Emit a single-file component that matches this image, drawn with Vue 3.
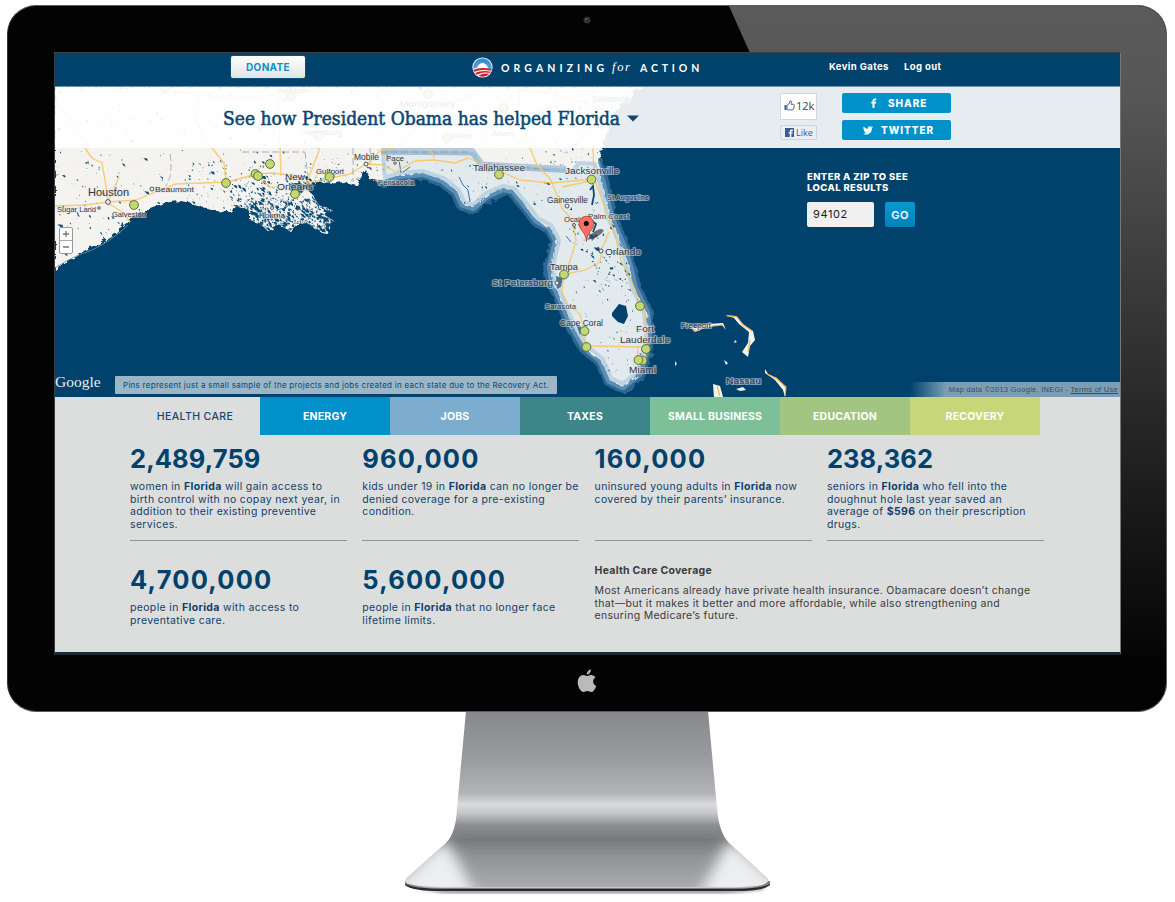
<script setup>
// Deterministic generator so the lakes and marshes always fall in the same places.
function makeRandom(seed) {
  let s = seed
  return () => {
    s = (s * 1664525 + 1013904223) % 4294967296
    return s / 4294967296
  }
}

function specks(seed, count, box, min, max) {
  const r = makeRandom(seed)
  let d = ''
  for (let i = 0; i < count; i++) {
    const x = box[0] + r() * box[2]
    const y = box[1] + r() * box[3]
    const s = min + r() * r() * (max - min)
    const slant = (r() - 0.5) * 2
    d += `M${x.toFixed(1)} ${y.toFixed(1)}l${(s * slant).toFixed(1)} ${(s * 0.8).toFixed(1)}l${(s * 0.7).toFixed(1)} ${(s * 0.5 * r()).toFixed(1)}l${(-s * 0.3).toFixed(1)} ${(-s * 0.9).toFixed(1)}z`
  }
  return d
}

const lakes = [
  specks(7, 330, [55, 87, 550, 100], 0.5, 3.6),
  specks(11, 110, [55, 150, 110, 110], 0.6, 4),
  specks(19, 480, [228, 175, 110, 60], 0.8, 4.8),
  specks(61, 520, [246, 198, 90, 38], 1, 5.2),
  specks(23, 110, [185, 160, 90, 50], 0.6, 3.6),
  specks(29, 60, [300, 162, 90, 26], 0.5, 3),
  specks(31, 90, [545, 90, 65, 80], 0.7, 3.6),
].join('')

const floridaLakes = [
  specks(41, 55, [440, 160, 140, 45], 0.5, 3.4),
  specks(43, 60, [565, 185, 55, 75], 0.6, 4.6),
  specks(47, 70, [590, 250, 42, 40], 0.8, 4.4),
  specks(53, 50, [570, 275, 70, 60], 0.5, 3.2),
  specks(59, 30, [600, 335, 45, 45], 0.5, 2.6),
].join('')

const land =
  'M55 87L55 270 66 261 76 257 88 248 101 243 112 237 121 227 128 222 137 215 150 208 161 204 170 202 181 201 190 203 198 207 207 208 216 211 230 212 237 206 246 208 250 212 250 221 259 223 267 230 275 226 283 227 290 231 298 224 307 223 314 228 326 234 330 226 334 221 325 215 333 210 322 207 317 203 313 195 305 188 307 185 317 182 330 184 343 182 357 185 362 176 366 170 370 180 380 182 392 176 400 175 412 174 423 173 434 175 443 180 451 185 457 191 463 204 473 207 480 200 487 195 496 190 503 188 513 190 519 197 527 207 532 215 537 220 545 226 550 227 555 233 557 240 554 250 553 257 551 267 556 273 553 283 557 290 561 299 565 308 570 314 572 325 580 334 585 347 592 355 601 360 607 370 610 380 617 384 623 386 631 379 639 373 643 361 645 353 648 333 646 312 641 302 634 288 630 270 625 253 620 240 615 228 610 217 606 200 602 188 600 170 598 160 602 148 606 136 611 122 616 111 622 103 630 98 634 91 643 87Z'

const florida =
  'M381 150L475 152 482 164 572 169 578 161 596 162 601 180 606 200 610 217 620 240 625 253 630 270 634 288 641 302 646 312 648 333 645 353 639 373 623 386 610 380 601 360 585 347 572 325 565 308 557 290 553 283 551 267 557 240 550 227 537 220 527 207 513 190 503 188 487 195 473 207 463 204 457 191 443 180 423 173 400 175 383 180Z'

const roads = [
  'M85 148L92 158 102 163 106 186 108 203 122 212 130 222',
  'M55 206L85 205 108 202 136 200 160 190 176 184 228 182 256 174 272 173 290 175 307 183 330 178 350 174 366 164 383 165 396 172 415 161 434 160 455 163 468 158 497 170 520 180 552 183 593 179',
  'M212 148L224 163 226 183', 'M260 178L270 187 293 189', 'M280 148L281 176',
  'M320 148L307 182', 'M366 165L380 151 396 147', 'M108 202L119 177',
  'M530 148L537 165 551 180 562 208 572 220 576 240 571 258 566 272',
  'M593 148L594 178 604 205 615 235 621 260 633 285 643 310 647 330 645 360',
  'M566 274L585 270 600 262 602 248 609 232', 'M564 275L562 292 568 305 580 314 584 330 586 346',
  'M586 346L645 347', 'M429 148L435 158', 'M562 187L595 180', 'M638 347L637 360',
  'M55 100L70 120 90 148', 'M170 92L240 99 330 88', 'M280 148L278 90', 'M210 148L195 120 200 90',
  'M520 88L519 105 530 148', 'M519 90L550 93 590 104', 'M400 148L430 110 470 96',
]

const pins = [
  [134, 205], [226, 183], [270, 164], [255.5, 174], [258, 176], [295, 194], [329.5, 177],
  [499, 174.5], [591.5, 179.5], [564, 274.5], [640, 306], [584.5, 331], [586.5, 347],
  [646, 349], [642.5, 360.5], [638.5, 360], [165, 88], [291, 96], [319, 136], [428, 94], [504, 108], [447, 138],
]

// x, y, text, size, rendered width
const labels = [
  [88, 196, 'Houston', 10.5, 41], [57, 212, 'Sugar Land', 8, 39], [112, 217, 'Galveston', 8, 34],
  [155, 192, 'Beaumont', 8, 39], [285, 180, 'New', 9.5, 20], [277, 190, 'Orleans', 9.5, 36],
  [259, 218, 'Houma', 8, 26], [316, 174, 'Gulfport', 8, 28], [354, 160, 'Mobile', 9, 25],
  [386, 161, 'Pace', 8, 18], [378, 185, 'Pensacola', 8, 36], [473, 171, 'Tallahassee', 9.5, 52],
  [565, 174, 'Jacksonville', 9.5, 54], [547, 203, 'Gainesville', 8.5, 41], [607, 200, 'St Augustine', 8, 42],
  [564, 222, 'Ocala', 8, 20], [588, 219, 'Palm Coast', 8, 41], [605, 255, 'Orlando', 9.5, 36],
  [550, 270, 'Tampa', 9.5, 28], [492, 286, 'St Petersburg', 9.5, 61], [545, 309, 'Sarasota', 8, 31],
  [560, 326, 'Cape Coral', 8.5, 43], [636, 332, 'Fort', 9.5, 18], [620, 343, 'Lauderdale', 9, 50],
  [629, 373, 'Miami', 9.5, 27], [681, 328, 'Freeport', 8, 30], [726, 384, 'Nassau', 9.5, 35],
  [277, 93, 'Jackson', 8, 30], [303, 135, 'Hattiesburg', 8, 39], [400, 107, 'Montgomery', 9.5, 55],
  [450, 138, 'Dothan', 8, 22], [492, 136, 'Albany', 8, 23], [592, 102, 'Savannah', 9, 38],
]

const towns = [[152, 189, 2], [99, 208, 1.3], [108, 202, 2.4], [395, 163, 1.3], [366, 164, 2], [567, 206, 2], [574, 225, 1.5], [601, 251, 2], [272, 208, 1.5], [557, 283, 2]]

const tabs = [
  { name: 'HEALTH CARE', tone: 'active' },
  { name: 'ENERGY', tone: 'energy' },
  { name: 'JOBS', tone: 'jobs' },
  { name: 'TAXES', tone: 'taxes' },
  { name: 'SMALL BUSINESS', tone: 'small' },
  { name: 'EDUCATION', tone: 'education' },
  { name: 'RECOVERY', tone: 'recovery' },
]

const stats = [
  { n: '2,489,759', lines: [['women in ', 'Florida', ' will gain access to'], ['birth control with no copay next year, in'], ['addition to their existing preventive'], ['services.']] },
  { n: '960,000', wide: true, lines: [['kids under 19 in ', 'Florida', ' can no longer be'], ['denied coverage for a pre-existing'], ['condition.']] },
  { n: '160,000', wide: true, lines: [['uninsured young adults in ', 'Florida', ' now'], ['covered by their parents’ insurance.']] },
  { n: '238,362', lines: [['seniors in ', 'Florida', ' who fell into the'], ['doughnut hole last year saved an'], ['average of ', '$596', ' on their prescription'], ['drugs.']] },
  { n: '4,700,000', wide: true, lines: [['people in ', 'Florida', ' with access to'], ['preventative care.']] },
  { n: '5,600,000', wide: true, lines: [['people in ', 'Florida', ' that no longer face'], ['lifetime limits.']] },
]
</script>

<template>
  <div class="stage">
    <div class="monitor">
      <div class="glare"></div>
      <svg class="camera" viewBox="0 0 10 10"><circle cx="5" cy="5" r="3.6" fill="#25262a" /><circle cx="5" cy="5" r="2.6" fill="#4a4b50" /><circle cx="5" cy="5" r="1.6" fill="#17181c" /><circle cx="4.6" cy="4.4" r=".7" fill="#8d8f96" /></svg>
      <div class="screen">
        <header class="topbar">
          <button class="donate">DONATE</button>
          <div class="brand">
            <svg class="brand-mark" viewBox="0 0 22 22">
              <defs>
                <clipPath id="disc"><circle cx="11" cy="11" r="9.8" /></clipPath>
                <linearGradient id="sky" x1="0" y1="0" x2="0" y2="1"><stop offset="0" stop-color="#2f86c6" /><stop offset="1" stop-color="#7cb8e2" /></linearGradient>
              </defs>
              <circle cx="11" cy="11" r="10.6" fill="#fff" />
              <g clip-path="url(#disc)">
                <rect width="22" height="22" fill="url(#sky)" />
                <circle cx="11" cy="12" r="5.6" fill="#fff" />
                <path d="M0 12.6Q10 9 22 13.5V22H0Z" fill="#fff" />
                <path d="M0 14.2Q9 9.6 22 13.2V15Q10 11.4 0 16.6ZM1 18Q10 12.4 22 15.9V17.4Q11 14.2 3 20ZM5 21Q12 15.6 21 18.3L18 22H5Z" fill="#d0202e" />
              </g>
            </svg>
            <span class="brand-name">ORGANIZING</span><em>for</em><span class="brand-name action">ACTION</span>
          </div>
          <nav class="account"><span class="user">Kevin Gates</span><span class="logout">Log out</span></nav>
        </header>

        <section class="hero">
          <svg class="map" viewBox="55 87 1065 310">
            <defs>
              <clipPath id="landclip"><path :d="land" /></clipPath>
              <clipPath id="flclip"><path :d="florida" /></clipPath>
              <filter id="rough" x="-5%" y="-5%" width="110%" height="110%">
                <feTurbulence type="fractalNoise" baseFrequency=".17" numOctaves="3" seed="4" result="n" />
                <feDisplacementMap in="SourceGraphic" in2="n" scale="7" />
              </filter>
              <filter id="soft"><feGaussianBlur stdDeviation=".35" /></filter>
            </defs>
            <rect x="55" y="87" width="1065" height="310" fill="#00426b" />
            <path class="glow outer" :d="florida" filter="url(#rough)" />
            <path class="glow" :d="florida" filter="url(#soft)" />
            <g filter="url(#rough)">
              <path :d="land" fill="#f5f3f0" />
              <path :d="florida" fill="#e2eaed" />
            </g>
            <g clip-path="url(#landclip)">
              <path :d="lakes" fill="#0c4c75" />
              <path class="border" d="M170 154Q172 165 170 177L166 186M242 152L305 152M305 152L308 176M353 148L353 182M370 148L371 162" />
            </g>
            <g clip-path="url(#flclip)">
              <path class="rim" :d="florida" filter="url(#soft)" />
              <path :d="floridaLakes" fill="#0c4c75" />
              <path d="M612 313L619 304 626 306 628 316 624 324 618 322 612 316Z" fill="#00426b" />
              <path d="M590 190L593 186 594 195 592 205M591 220L596 224 593 232" class="river" />
              <path d="M588 232L591 239M566 236L571 242M459 177L463 185 468 190 470 202M399 160L401 173M403 172L410 167" class="river thin" />
              <path d="M556 276L563 278 561 287 557 289ZM575 321L582 328 580 335ZM589 233L596 237 592 241Z" fill="#3f779e" />
            </g>
            <path class="band" d="M381 151.500H472L482 165 566 169.500" />
            <path d="M381 152H470M483 163L550 170" class="border" />
            <g class="roads"><path v-for="(d, i) in roads" :key="i" :d="d" /></g>
            <path class="marsh" d="M289 184Q300 181 307 186L302 193 292 192Z" />
            <path d="M55 268Q75 255 90 251Q112 241 128 225" class="shoal" />
            <g class="isles">
              <path d="M688 325L695 332 703 327 722 325 726 330 723 323 708 324 695 328ZM725 315L736 316 743 324 753 331 755 340 750 346 748 357 742 352 748 343 749 332 739 324 734 318ZM713 384L720 386 723 397 714 397ZM736 389L743 387 746 390 740 391ZM765 369L768 374 777 378 786 388 785 397 783 390 775 380 765 373ZM724 360L728 363 726 365ZM675 361L677 364 675 366ZM735 340L737 342 734 343Z" />
              <path d="M690 326L696 331 706 327 722 325M727 316L737 317 743 325 752 331M750 340L748 352M717 386L720 396M767 374L777 379 786 387 785 396" class="isle-road" />
            </g>
            <g>
              <circle v-for="(t, i) in towns" :key="i" :cx="t[0]" :cy="t[1]" :r="t[2]" class="town" />
            </g>
            <g class="labels">
              <text v-for="l in labels" :key="l[2]" :x="l[0]" :y="l[1]" :font-size="l[3]" :textLength="l[4]" lengthAdjust="spacingAndGlyphs">{{ l[2] }}</text>
            </g>
            <circle v-for="(p, i) in pins" :key="i" :cx="p[0]" :cy="p[1]" r="4.4" class="pin" />
            <path d="M587 240Q592 231 600 229Q606 229 602 233Q597 238 587 240Z" fill="#333" opacity=".65" filter="url(#soft)" />
            <path d="M586.5 241.5C586 232 579 230.500 579 223.500A7.300 7.300 0 0 1 593.600 223.500C593.600 230.500 587 232 586.500 241.500Z" fill="#fb7064" stroke="#b3372f" stroke-width=".8" />
            <circle cx="586.300" cy="223.500" r="2.500" fill="#100" />
            <g class="zoomer">
              <rect x="59.500" y="227.500" width="13" height="26" rx="1.500" />
              <path d="M59.500 240.500H72.500" stroke="#aaa" />
              <path d="M63 234H69M66 231V237M63 247H69" stroke="#777" stroke-width="1.300" />
            </g>
          </svg>

          <div class="banner">
            <h1>See how President Obama has helped Florida</h1>
            <svg class="caret" viewBox="0 0 12 7"><path d="M0 .5H12L6 6.500Z" fill="#0b4770" /></svg>
            <div class="likes">
              <div class="count">
                <svg viewBox="0 0 11 11"><path d="M.5 5H2.500V10H.5Z" fill="#3b5998" /><path d="M3 5.200L5.200 3.600 6 .9Q7.600 .6 7.400 2.400L7 4.300H9.800Q10.600 4.600 10.300 5.500L9.500 9.200Q9.200 9.900 8.400 9.900H4.500L3 9.300Z" fill="#fff" stroke="#3b5998" stroke-width=".9" /></svg>
                <span>12k</span>
              </div>
              <div class="like">
                <svg viewBox="0 0 10 10"><rect width="10" height="10" fill="#3b5998" /><path d="M5.300 10V6.200H4V4.700H5.300V3.500Q5.300 1.700 7.100 1.700H8.700V3.200H7.700Q7 3.200 7 3.900V4.700H8.600L8.400 6.200H7V10Z" fill="#fff" /></svg>
                <span>Like</span>
              </div>
            </div>
            <div class="shares">
              <button class="share">
                <svg class="fb" viewBox="0 0 6 10"><path d="M1.500 10V5.500H.2V3.700H1.500V2.600Q1.500 .4 3.700 .4H5.300V2.200H4.300Q3.500 2.200 3.500 2.900V3.700H5.300L5 5.500H3.500V10Z" fill="#fff" /></svg>
                <span>SHARE</span>
              </button>
              <button class="share tweet">
                <svg class="bird" viewBox="0 0 24 20"><path d="M24 2.400a9.800 9.800 0 0 1-2.800.8A5 5 0 0 0 23.300.5a9.900 9.900 0 0 1-3.100 1.200 4.900 4.900 0 0 0-8.400 4.500A14 14 0 0 1 1.700 1a4.900 4.900 0 0 0 1.500 6.600 4.900 4.900 0 0 1-2.200-.6 4.900 4.900 0 0 0 3.900 4.900 5 5 0 0 1-2.200.1 4.900 4.900 0 0 0 4.600 3.400A9.900 9.900 0 0 1 0 17.500 14 14 0 0 0 21.500 5Z" fill="#fff" /></svg>
                <span>TWITTER</span>
              </button>
            </div>
          </div>

          <form class="zip" @submit.prevent>
            <label>ENTER A ZIP TO SEE<br>LOCAL RESULTS</label>
            <div class="zip-row"><div class="field">94102</div><button class="go">GO</button></div>
          </form>

          <div class="map-footer">
            <span class="google">Google</span>
            <span class="note">Pins represent just a small sample of the projects and jobs created in each state due to the Recovery Act.</span>
            <span class="credit">Map data ©2013 Google, INEGI - <u>Terms of Use</u></span>
          </div>
        </section>

        <nav class="tabs">
          <span v-for="t in tabs" :key="t.name" class="tab" :class="t.tone">{{ t.name }}</span>
        </nav>

        <main class="stats">
          <article v-for="(s, i) in stats" :key="s.n" class="stat" :class="{ ruled: i < 4, wide: s.wide }">
            <h2>{{ s.n }}</h2>
            <p><span v-for="(line, j) in s.lines" :key="j" class="line"><template v-for="(part, k) in line" :key="k"><b v-if="k === 1">{{ part }}</b><template v-else>{{ part }}</template></template></span></p>
          </article>
          <article class="about">
            <h3>Health Care Coverage</h3>
            <p>
              <span class="line">Most Americans already have private health insurance. Obamacare doesn’t change</span>
              <span class="line">that—but it makes it better and more affordable, while also strengthening and</span>
              <span class="line">ensuring Medicare’s future.</span>
            </p>
          </article>
        </main>
      </div>
      <svg class="apple" viewBox="0 0 20 24"><path d="M13.900.5C14.100 3.300 11.900 5.500 9.800 5.500 9.600 3 11.700.9 13.900.5ZM10 7C11 7 12.200 5.900 14 5.900 16 5.900 17.700 6.900 18.600 8.300 15 10.400 15.500 15.400 19.300 16.900 18.600 19 16.600 23 14.300 23 12.800 23 12.300 22.100 10.400 22.100S7.800 23 6.500 23C3.500 23 .7 17.600.7 13.300.7 8.800 3.500 6 6.300 6 8 6 9.100 7 10 7Z" fill="#b9babc" /></svg>
    </div>

    <svg class="stand" viewBox="395 712 385 186">
      <defs>
        <linearGradient id="metal" x1="0" y1="0" x2="0" y2="1">
          <stop offset="0" stop-color="#87888c" /><stop offset=".28" stop-color="#9b9ca0" /><stop offset=".47" stop-color="#b4b5b9" />
          <stop offset=".53" stop-color="#dadbde" /><stop offset=".58" stop-color="#c5c6c9" /><stop offset=".65" stop-color="#8d8e91" />
          <stop offset=".73" stop-color="#78797c" /><stop offset=".83" stop-color="#929396" /><stop offset="1" stop-color="#a9aaad" />
        </linearGradient>
        <clipPath id="foot"><path d="M457 820Q454 836 446 843L408 877Q402 882 409 884Q420 887 440 887H735Q750 887 762 885 771 882 767 878L729 843Q721 836 718 820Z" /></clipPath>
        <linearGradient id="edge"><stop offset="0" stop-color="#777" /><stop offset=".1" stop-color="#c9cacd" /><stop offset=".9" stop-color="#c9cacd" /><stop offset="1" stop-color="#777" /></linearGradient>
        <filter id="shade" x="-5%" y="-50%" width="110%" height="200%"><feGaussianBlur stdDeviation="1" /></filter>
        <filter id="gleam" x="-50%" y="-50%" width="200%" height="200%"><feGaussianBlur stdDeviation="7" /></filter>
      </defs>
      <path d="M405 884Q410 889 430 891H744Q765 890 770 884L762 890Q745 893 720 893H450Q415 892 405 884Z" fill="#777" filter="url(#shade)" />
      <path d="M405 882V885Q412 891 440 891H735Q764 891 770 885V882Z" fill="#292a2e" />
      <path d="M405 881V884Q414 888.500 440 888.500H735Q762 888.500 770 884V881Z" fill="url(#edge)" />
      <path d="M466 711H708L717 808Q719 833 729 843L767 878Q771 882 762 885Q750 887 735 887H440Q420 887 409 884Q402 882 408 877L446 843Q456 833 457 808Z" fill="url(#metal)" />
      <g clip-path="url(#foot)">
        <path d="M443 840L380 900H478L452 850ZM732 840L795 900H697L723 850Z" fill="#edeef0" filter="url(#gleam)" />
      </g>
    </svg>
  </div>
</template>

<style>
body { margin: 0; background: #fff; }
</style>

<style scoped>
.stage { width: 1175px; height: 902px; overflow: hidden; background: #fff; box-sizing: border-box; padding: 5px 0 0 7px; font-family: Inter, "Noto Sans", sans-serif; display: flex; flex-direction: column; }
.monitor { position: relative; width: 1160px; height: 707px; box-sizing: border-box; background: #030303; border-radius: 29px; border: 1px solid #5d5f5f; border-left-color: #333; padding: 46px 0 0 46px; flex: none; }
.glare { position: absolute; inset: 0; border-radius: 28px; background: linear-gradient(#5a5a5a, #575757 12%, #3c3c3c 38%, #1b1b1b 70%, #050505 92%, transparent 93%); clip-path: polygon(721px 0, 100% 0, 100% 100%, 1112px 100%, 1112px 47px, 742px 47px); }
.camera { position: absolute; left: 574px; top: 9px; width: 10px; height: 10px; }
.screen { position: relative; width: 1065px; height: 599px; border: 1px solid #3b4045; border-bottom: 3px solid #1a2a3a; border-right-color: #777; background: #dcdedd; display: flex; flex-direction: column; }
button { font-family: inherit; border: 0; padding: 0; margin: 0; }

.topbar { height: 33px; background: #00426b; display: flex; align-items: flex-start; color: #fff; flex: none; border-bottom: 1px solid #6c94b0; box-sizing: content-box; }
.donate { margin: 3px 0 0 176px; width: 74px; height: 22px; border-radius: 2px; background: linear-gradient(#fff, #e3e4e5); color: #0d8fca; font-size: 10px; font-weight: 700; letter-spacing: .35px; box-shadow: 0 0 1px #bcd; }
.brand { display: flex; align-items: center; margin: 3px 0 0 167px; height: 23px; width: 231px; white-space: nowrap; }
.brand-mark { width: 21px; height: 21px; flex: none; }
.brand-name { width: 111px; flex: none; font-size: 10.500px; font-weight: 700; letter-spacing: 4.080px; margin-left: 8px; font-family: Lato, sans-serif; }
.brand em { width: 24px; flex: none; font-family: "Liberation Serif", serif; font-size: 12.500px; letter-spacing: 1.700px; margin-left: 0; }
.brand-name.action { width: 66px; margin-left: 4px; letter-spacing: 3.850px; }
.account { display: flex; margin: 8px 0 0 126px; font-size: 9.500px; font-weight: 700; line-height: 12px; white-space: nowrap; letter-spacing: .4px; }
.user { width: 75px; }

.hero { position: relative; height: 310px; flex: none; display: flex; flex-direction: column; overflow: hidden; }
.map { position: absolute; left: 0; top: 0; width: 1065px; height: 310px; }
.glow { fill: #6d9dc4; fill-opacity: .6; stroke: #7aa8cc; stroke-opacity: .6; stroke-width: 8; stroke-linejoin: round; }
.glow.outer { stroke: #4d82ab; stroke-width: 14; stroke-opacity: .6; }
.rim { fill: none; stroke: #a3c2d8; stroke-opacity: .55; stroke-width: 8; }
.band { fill: none; stroke: #8fb4d0; stroke-opacity: .65; stroke-width: 7; }
.roads { fill: none; stroke: #f6c65e; stroke-width: 1.350; stroke-opacity: .85; stroke-linejoin: round; }
.border { fill: none; stroke: #8a949b; stroke-width: .7; stroke-dasharray: 7 3; }
.river { fill: none; stroke: #0c4c75; stroke-width: 1.800; }
.river.thin { stroke: #3f7499; stroke-width: 1; }
.shoal { fill: none; stroke: #6f97b2; stroke-width: .8; }
.marsh { fill: #00426b; opacity: .85; }
.isles { fill: #f5f3f0; }
.isle-road { fill: none; stroke: #edb847; stroke-width: 1.100; }
.town { fill: #eee; stroke: #555; stroke-width: 1; }
.labels text { font-family: "Liberation Sans", Arial, sans-serif; fill: #36383b; stroke: rgba(225, 232, 238, .55); stroke-width: 2.200px; stroke-linejoin: round; paint-order: stroke; }
.pin { fill: #c3d773; stroke: #5f7038; stroke-width: 1; }
.zoomer { fill: #fff; stroke: #9a9a9a; }

.banner { position: relative; height: 61px; background: rgba(255, 255, 255, .9); display: flex; align-items: flex-start; flex: none; }
.banner h1 { margin: 18px 0 0 168px; width: 404px; font-family: "DejaVu Serif Condensed", "DejaVu Serif", serif; font-stretch: condensed; font-weight: 400; font-size: 19px; line-height: 26px; letter-spacing: .03px; color: #0b4770; white-space: nowrap; -webkit-text-stroke: .55px #0b4770; }
.caret { width: 12px; height: 7px; margin-top: 28px; }
.likes { margin: 6px 0 0 141px; width: 37px; display: flex; flex-direction: column; gap: 5px; }
.count { height: 27px; background: #fff; border: 1px solid #d5d9dc; box-sizing: border-box; display: flex; align-items: center; padding: 0 0 2px 3px; font: 11px "Open Sans", sans-serif; color: #444; }
.count svg { width: 11px; height: 11px; margin-right: 1px; flex: none; }
.like { height: 15px; background: #eceef5; border: 1px solid #cad4e7; box-sizing: border-box; border-radius: 2px; display: flex; align-items: center; gap: 2px; padding-left: 4px; font: 9px "Open Sans", sans-serif; color: #3b5998; }
.like svg { width: 9px; height: 9px; flex: none; }
.shares { margin: 6px 0 0 25px; display: flex; flex-direction: column; gap: 7px; }
.share { width: 109px; height: 20px; border-radius: 2px; background: #0090ca; color: #fff; display: flex; align-items: center; font-size: 10px; font-weight: 800; letter-spacing: .95px; padding: 0 0 1px 29px; box-shadow: 0 0 1px #fff; }
.fb { width: 6px; height: 10px; margin: 1px 11px 0 0; }
.tweet { padding-left: 21px; }
.bird { width: 10px; height: 9px; margin-right: 8px; margin-top: 1px; }

.zip { position: relative; margin: 23px 0 0 752px; color: #fff; }
.zip label { display: block; font-size: 9.500px; font-weight: 800; line-height: 11px; letter-spacing: .4px; white-space: nowrap; }
.zip-row { display: flex; gap: 11px; margin-top: 9px; }
.field { width: 67px; height: 25px; box-sizing: border-box; border-radius: 2px; background: #f0f0f1; color: #222; padding-left: 6px; font-size: 11px; line-height: 25px; letter-spacing: .6px; }
.go { width: 30px; height: 25px; border-radius: 2px; background: linear-gradient(#0898d3, #0480b8); color: #fff; font-weight: 600; font-size: 11px; letter-spacing: .5px; }

.map-footer { position: relative; margin-top: auto; display: flex; align-items: flex-end; height: 24px; font-size: 8px; }
.google { width: 60px; font: 15.500px/22px "Liberation Serif", serif; color: #e7edf1; letter-spacing: 0; box-sizing: border-box; padding-bottom: 2px; height: 26px; }
.note { width: 442px; height: 18px; margin-bottom: 3px; box-sizing: border-box; background: rgba(205, 221, 230, .75); color: #12496f; line-height: 18px; letter-spacing: .275px; padding-left: 8px; white-space: nowrap; border-radius: 1px; }
.credit { margin-left: auto; width: 210px; height: 15px; box-sizing: border-box; padding-right: 2px; text-align: right; background: linear-gradient(90deg, rgba(150, 178, 197, 0), rgba(150, 178, 197, .82) 36px); color: #3d4d58; font: 7.500px/15px "Liberation Sans", Arial, sans-serif; letter-spacing: .28px; white-space: nowrap; }

.tabs { display: flex; height: 38px; padding-left: 75px; flex: none; }
.tab { width: 130px; text-align: center; color: #fff; font-size: 10.500px; font-weight: 700; letter-spacing: .2px; line-height: 39px; white-space: nowrap; }
.tab.active { color: #12476e; font-weight: 500; letter-spacing: .4px; }
.energy { background: #0090ca; }
.jobs { background: #7dadce; }
.taxes { background: #3c8588; }
.small { background: #7dc098; }
.education { background: #a2c682; }
.recovery { background: #c7d678; }

.stats { display: grid; grid-template-columns: repeat(4, 217px); column-gap: 15.300px; grid-template-rows: 106px auto; row-gap: 15px; padding-left: 75px; color: #12406a; }
.stat { padding-top: 9px; box-sizing: border-box; }
.ruled { border-bottom: 1px solid #8f9596; }
.stat h2 { margin: 0; font-size: 25.500px; line-height: 30px; font-weight: 700; color: #00426b; letter-spacing: .1px; }
.stat.wide h2 { letter-spacing: 1.200px; }
p { margin: 7px 0 0; font-size: 10.500px; line-height: 12.500px; letter-spacing: .34px; }
.line { display: block; white-space: nowrap; }
.about { grid-column: span 2; color: #3b3b3b; padding-top: 8px; }
.about h3 { margin: 0; font-size: 10.500px; line-height: 14px; font-weight: 700; letter-spacing: .25px; }
.about p { margin-top: 7px; letter-spacing: .3px; }
.apple { position: absolute; left: 569px; top: 663px; width: 20px; height: 24px; }
.stand { width: 385px; height: 186px; margin-left: 388px; flex: none; }
</style>
